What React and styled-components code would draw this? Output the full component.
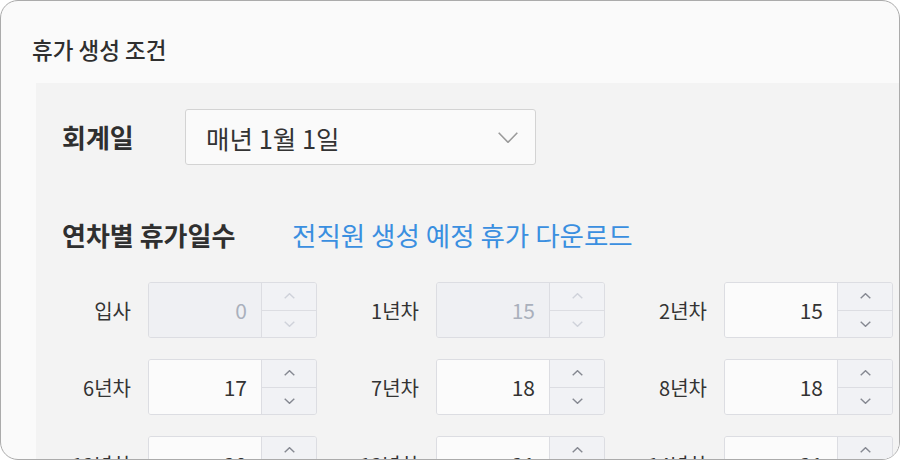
import styled, { createGlobalStyle } from 'styled-components';

const Global = createGlobalStyle`
	body {
		margin: 0;
		background: #ffffff;
		font-family: "Noto Sans CJK KR", "Noto Sans", sans-serif;
		color: #333333;
	}
`;

const Frame = styled.div`
	width: 900px;
	height: 460px;
	box-sizing: border-box;
	border: 1px solid #ababab;
	border-radius: 18px;
	background: #fafafa;
	overflow: hidden;
	display: flex;
	flex-direction: column;
`;
const Title = styled.h1`
	flex-shrink: 0;
	margin: 0;
	height: 82px;
	box-sizing: border-box;
	padding: 34px 0 0 31px;
	font-size: 22.5px;
	line-height: 28px;
	font-weight: 500;
	color: #2f2f2f;
`;
const Panel = styled.section`
	flex-shrink: 0;
	margin-left: 35px;
	background: #f3f3f3;
	padding: 26px 0 0 26px;
	box-sizing: border-box;
`;
const Row = styled.div`
	display: flex;
	align-items: center;
	margin-bottom: ${(p) => p.$mb || 0}px;
`;
const Heading = styled.h2`
	margin: 0;
	width: ${(p) => p.$width}px;
	font-size: 26px;
	line-height: 40px;
	font-weight: 700;
	color: #2f2f2f;
	white-space: nowrap;
`;
const Select = styled.div`
	width: 351px;
	height: 56px;
	box-sizing: border-box;
	border: 1px solid #d3d3d3;
	border-radius: 3px;
	background: #fafafa;
	display: flex;
	align-items: center;
	justify-content: space-between;
	padding: 0 17px 0 20px;
	font-size: 25.5px;
	color: #333;
`;
const Link = styled.a`
	font-size: 26.5px;
	line-height: 40px;
	color: #3a8fe0;
	text-decoration: none;
	cursor: pointer;
	white-space: nowrap;
`;
const Grid = styled.div`
	display: grid;
	grid-template-columns: repeat(3, 255px);
	column-gap: 33px;
	row-gap: 21px;
`;
const Cell = styled.div`
	display: flex;
	align-items: center;
	gap: 17px;
`;
const Label = styled.span`
	width: 69px;
	text-align: right;
	font-size: 20px;
	color: #333;
	white-space: nowrap;
`;
const Spin = styled.div`
	width: 169px;
	height: 56px;
	box-sizing: border-box;
	border: 1px solid #dcdde2;
	border-radius: 3px;
	display: flex;
	overflow: hidden;
`;
const Field = styled.div`
	flex: 1;
	display: flex;
	align-items: center;
	justify-content: flex-end;
	padding-right: 14px;
	font-size: 21px;
	background: ${(p) => (p.$disabled ? '#eff0f3' : '#fbfbfb')};
	color: ${(p) => (p.$disabled ? '#aab0bc' : '#333')};
`;
const Steps = styled.div`
	width: 54px;
	border-left: 1px solid #dcdde2;
	display: flex;
	flex-direction: column;
	background: #f1f2f5;
`;
const Step = styled.div`
	flex: 1;
	display: flex;
	align-items: center;
	justify-content: center;
	& + & {
		border-top: 1px solid #dcdde2;
	}
`;

const Chevron = ({ up, color, w = 11, h = 6, sw = 1.4 }) => (
	<svg width={w} height={h} viewBox={`0 0 ${w} ${h}`} fill="none">
		<polyline
			points={up ? `0.7,${h - 0.7} ${w / 2},0.7 ${w - 0.7},${h - 0.7}` : `0.7,0.7 ${w / 2},${h - 0.7} ${w - 0.7},0.7`}
			stroke={color}
			strokeWidth={sw}
		/>
	</svg>
);

// only the three columns that fit the window are drawn
const days = [
	['입사', 0, true],
	['1년차', 15, true],
	['2년차', 15],
	['6년차', 17],
	['7년차', 18],
	['8년차', 18],
	['12년차', 20],
	['13년차', 21],
	['14년차', 21],
];

function NumberBox({ label, value, disabled }) {
	const c = disabled ? '#cfd2da' : '#858891';
	return (
		<Cell>
			<Label>{label}</Label>
			<Spin>
				<Field $disabled={disabled}>{value}</Field>
				<Steps>
					<Step>
						<Chevron up color={c} />
					</Step>
					<Step>
						<Chevron color={c} />
					</Step>
				</Steps>
			</Spin>
		</Cell>
	);
}

export default function App() {
	return (
		<>
			<Global />
			<Frame>
				<Title>휴가 생성 조건</Title>
				<Panel>
					<Row $mb={50}>
						<Heading $width={123}>회계일</Heading>
						<Select>
							<span>매년 1월 1일</span>
							<Chevron color="#9a9a9a" w={20} h={11} sw={1.6} />
						</Select>
					</Row>
					<Row $mb={27}>
						<Heading $width={230}>연차별 휴가일수</Heading>
						<Link>전직원 생성 예정 휴가 다운로드</Link>
					</Row>
					<Grid>
						{days.map(([label, value, disabled]) => (
							<NumberBox key={label} label={label} value={value} disabled={disabled} />
						))}
					</Grid>
				</Panel>
			</Frame>
		</>
	);
}
